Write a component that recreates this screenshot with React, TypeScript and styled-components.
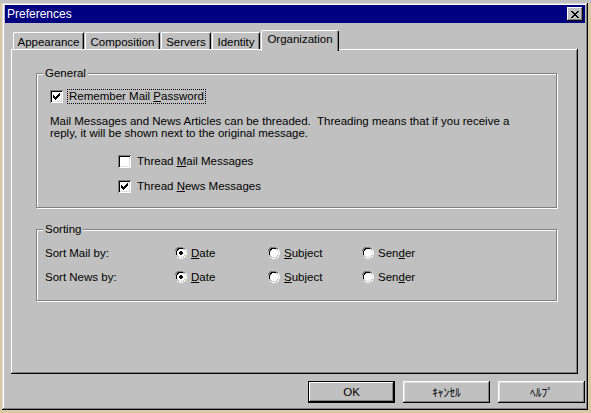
import React from 'react';
import styled, { createGlobalStyle } from 'styled-components';

const GlobalStyle = createGlobalStyle`
  html, body {
    margin: 0;
    padding: 0;
  }
  body {
    width: 591px;
    height: 413px;
    overflow: hidden;
    background:
      linear-gradient(#c0c0c0, #c0c0c0) top left / 100% 3px no-repeat,
      #d8c8a4;
    font-family: "Liberation Sans", "Noto Sans CJK JP", sans-serif;
    font-size: 11.5px;
    color: #000;
  }
`;

const Window = styled.div`
  margin: 3px 0 0 2px;
  width: 586px;
  height: 407px;
  box-sizing: border-box;
  padding: 2px 3px 3px 3px;
  background: #c0c0c0;
  box-shadow: inset -1px -1px 0 #000, inset 1px 1px 0 #dfdfdf,
    inset -2px -2px 0 #808080, inset 2px 2px 0 #fff;
  display: flex;
  flex-direction: column;
`;

const TitleBar = styled.div`
  height: 18px;
  background: #000080;
  color: #fff;
  display: flex;
  align-items: center;
  justify-content: space-between;
  padding: 0 2px 0 2px;
`;

const Title = styled.span`
  font-size: 12px;
  line-height: 18px;
`;

const CloseButton = styled.div`
  width: 16px;
  height: 14px;
  box-sizing: border-box;
  background: #c0c0c0;
  box-shadow: inset -1px -1px 0 #000, inset 1px 1px 0 #fff,
    inset -2px -2px 0 #808080;
  display: flex;
  align-items: center;
  justify-content: center;
`;

const Content = styled.div`
  padding: 7px 0 0 6px;
  display: flex;
  flex-direction: column;
`;

const TabStrip = styled.div`
  display: flex;
  align-items: flex-end;
  height: 19px;
  padding-left: 2px;
  position: relative;
  z-index: 1;
`;

const Tab = styled.div<{ $w: number; $active?: boolean }>`
  box-sizing: border-box;
  width: ${(p) => p.$w}px;
  height: ${(p) => (p.$active ? 21 : 17)}px;
  margin-bottom: ${(p) => (p.$active ? -2 : 0)}px;
  margin-right: 1px;
  padding-top: ${(p) => (p.$active ? 1 : 2)}px;
  background: #c0c0c0;
  border-top: 1px solid #fff;
  border-left: 1px solid #fff;
  border-right: 1px solid #000;
  border-top-left-radius: 2px;
  border-top-right-radius: 2px;
  box-shadow: inset -1px 0 0 #808080;
  text-align: center;
  line-height: 14px;
  white-space: nowrap;
`;

const Panel = styled.div`
  width: 567px;
  height: 325px;
  box-sizing: border-box;
  padding: 24px 0 0 25px;
  background: #c0c0c0;
  box-shadow: inset -1px -1px 0 #000, inset 1px 1px 0 #fff,
    inset -2px -2px 0 #808080;
  display: flex;
  flex-direction: column;
  gap: 21px;
`;

const Group = styled.div<{ $h: number }>`
  position: relative;
  width: 521px;
  height: ${(p) => p.$h}px;
  box-sizing: border-box;
  border: 1px solid #808080;
  box-shadow: inset 1px 1px 0 #fff, 1px 1px 0 #fff;
`;

const Legend = styled.span`
  position: absolute;
  top: -8px;
  left: 6px;
  padding: 0 2px;
  background: #c0c0c0;
  line-height: 14px;
`;

const GeneralBody = styled.div`
  padding: 16px 0 0 13px;
  display: flex;
  flex-direction: column;
`;

const CheckRow = styled.label<{ $indent?: number; $gapAbove?: number }>`
  display: flex;
  align-items: center;
  gap: 5px;
  height: 13px;
  margin-left: ${(p) => p.$indent ?? 0}px;
  margin-top: ${(p) => p.$gapAbove ?? 0}px;
`;

const Box = styled.span`
  width: 13px;
  height: 13px;
  box-sizing: border-box;
  background: #fff;
  box-shadow: inset 1px 1px 0 #808080, inset -1px -1px 0 #fff,
    inset 2px 2px 0 #000, inset -2px -2px 0 #dfdfdf;
  display: flex;
  align-items: center;
  justify-content: center;
  flex-shrink: 0;
`;

const LabelText = styled.span<{ $focus?: boolean }>`
  line-height: 13px;
  padding: 0 1px;
  outline: ${(p) => (p.$focus ? '1px dotted #000' : 'none')};
  outline-offset: 0;
`;

const Paragraph = styled.p`
  margin: 12px 0 16px 0;
  line-height: 12px;
  width: 480px;
`;

const SortGrid = styled.div`
  display: grid;
  grid-template-columns: 130px 93px 94px auto;
  grid-auto-rows: 24px;
  padding: 11px 0 0 8px;
  align-items: center;
`;

const RadioItem = styled.span`
  display: flex;
  align-items: center;
  gap: 4px;
`;

const Footer = styled.div`
  display: flex;
  justify-content: flex-end;
  gap: 8px;
  padding: 7px 0 0 0;
  width: 574px;
`;

const Button = styled.div<{ $default?: boolean }>`
  width: 87px;
  height: 22px;
  box-sizing: border-box;
  display: flex;
  align-items: center;
  justify-content: center;
  background: #c0c0c0;
  box-shadow: ${(p) =>
    p.$default
      ? 'inset 0 0 0 1px #000, inset -2px -2px 0 #000, inset 2px 2px 0 #fff, inset -3px -3px 0 #808080'
      : 'inset -1px -1px 0 #000, inset 1px 1px 0 #fff, inset -2px -2px 0 #808080, inset 2px 2px 0 #dfdfdf'};
`;

const CheckMark = () => (
  <svg width="7" height="7" viewBox="0 0 7 7" shapeRendering="crispEdges">
    <path d="M0 2h1v1h1v1h1v-1h1v-1h1v-1h1v-1h1v3h-1v1h-1v1h-1v1h-1v1h-1v-1h-1v-1h-1z" fill="#000" />
  </svg>
);

const Check = ({ checked }: { checked?: boolean }) => (
  <Box>{checked && <CheckMark />}</Box>
);

const Radio = ({ checked }: { checked?: boolean }) => (
  <svg width="12" height="12" viewBox="0 0 12 12" shapeRendering="crispEdges">
    <path d="M4 0h4v1h2v1h-6v1h-1v1h-1v4h-1v-4h-1v-2h1v-1h1v-1h1z" fill="#808080" />
    <path d="M4 1h4v1h-4v1h-1v1h-1v4h-1v-4h1v-2h1v-1h1z" fill="#000" />
    <path d="M10 2h1v2h1v4h-1v2h-1v1h-2v1h-4v-1h-2v-1h1v1h1v-0h4v-1h2v-2h1v-4h-1z" fill="#fff" />
    <path d="M3 10h2v1h2v-1h2v-1h1v-5h-1v-1h1v1h1v5h-1v1h-1v1h-6z" fill="#dfdfdf" />
    <path d="M4 2h4v1h1v1h1v4h-1v1h-1v1h-4v-1h-1v-1h-1v-4h1v-1h1z" fill="#fff" />
    {checked && <path d="M5 4h2v1h1v2h-1v1h-2v-1h-1v-2h1z" fill="#000" />}
  </svg>
);

const U = styled.span`
  text-decoration: underline;
  text-underline-offset: 1px;
`;

const App = () => {
  const sortRows = ['Sort Mail by:', 'Sort News by:'];
  return (
    <>
      <GlobalStyle />
      <Window>
        <TitleBar>
          <Title>Preferences</Title>
          <CloseButton>
            <svg width="8" height="7" viewBox="0 0 8 7" shapeRendering="crispEdges">
              <path d="M0 0h2v1h1v1h2v-1h1v-1h2v1h-1v1h-1v1h-1v1h1v1h1v1h1v1h-2v-1h-1v-1h-2v1h-1v1h-2v-1h1v-1h1v-1h1v-1h-1v-1h-1v-1h-1z" fill="#000" />
            </svg>
          </CloseButton>
        </TitleBar>
        <Content>
          <TabStrip>
            <Tab $w={71}>Appearance</Tab>
            <Tab $w={75}>Composition</Tab>
            <Tab $w={50}>Servers</Tab>
            <Tab $w={48}>Identity</Tab>
            <Tab $w={78} $active>Organization</Tab>
          </TabStrip>
          <Panel>
            <Group $h={135}>
              <Legend>General</Legend>
              <GeneralBody>
                <CheckRow>
                  <Check checked />
                  <LabelText $focus>
                    Remember Mail <U>P</U>assword
                  </LabelText>
                </CheckRow>
                <Paragraph>
                  Mail Messages and News Articles can be threaded.&nbsp; Threading means that if you receive a
                  reply, it will be shown next to the original message.
                </Paragraph>
                <CheckRow $indent={68}>
                  <Check />
                  <LabelText>
                    Thread <U>M</U>ail Messages
                  </LabelText>
                </CheckRow>
                <CheckRow $indent={68} $gapAbove={12}>
                  <Check checked />
                  <LabelText>
                    Thread <U>N</U>ews Messages
                  </LabelText>
                </CheckRow>
              </GeneralBody>
            </Group>
            <Group $h={72}>
              <Legend>Sorting</Legend>
              <SortGrid>
                {sortRows.map((label) => (
                  <React.Fragment key={label}>
                    <span>{label}</span>
                    <RadioItem>
                      <Radio checked />
                      <span>
                        <U>D</U>ate
                      </span>
                    </RadioItem>
                    <RadioItem>
                      <Radio />
                      <span>
                        <U>S</U>ubject
                      </span>
                    </RadioItem>
                    <RadioItem>
                      <Radio />
                      <span>
                        Sen<U>d</U>er
                      </span>
                    </RadioItem>
                  </React.Fragment>
                ))}
              </SortGrid>
            </Group>
          </Panel>
          <Footer>
            <Button $default>OK</Button>
            <Button>ｷｬﾝｾﾙ</Button>
            <Button>ﾍﾙﾌﾟ</Button>
          </Footer>
        </Content>
      </Window>
    </>
  );
};

export default App;
